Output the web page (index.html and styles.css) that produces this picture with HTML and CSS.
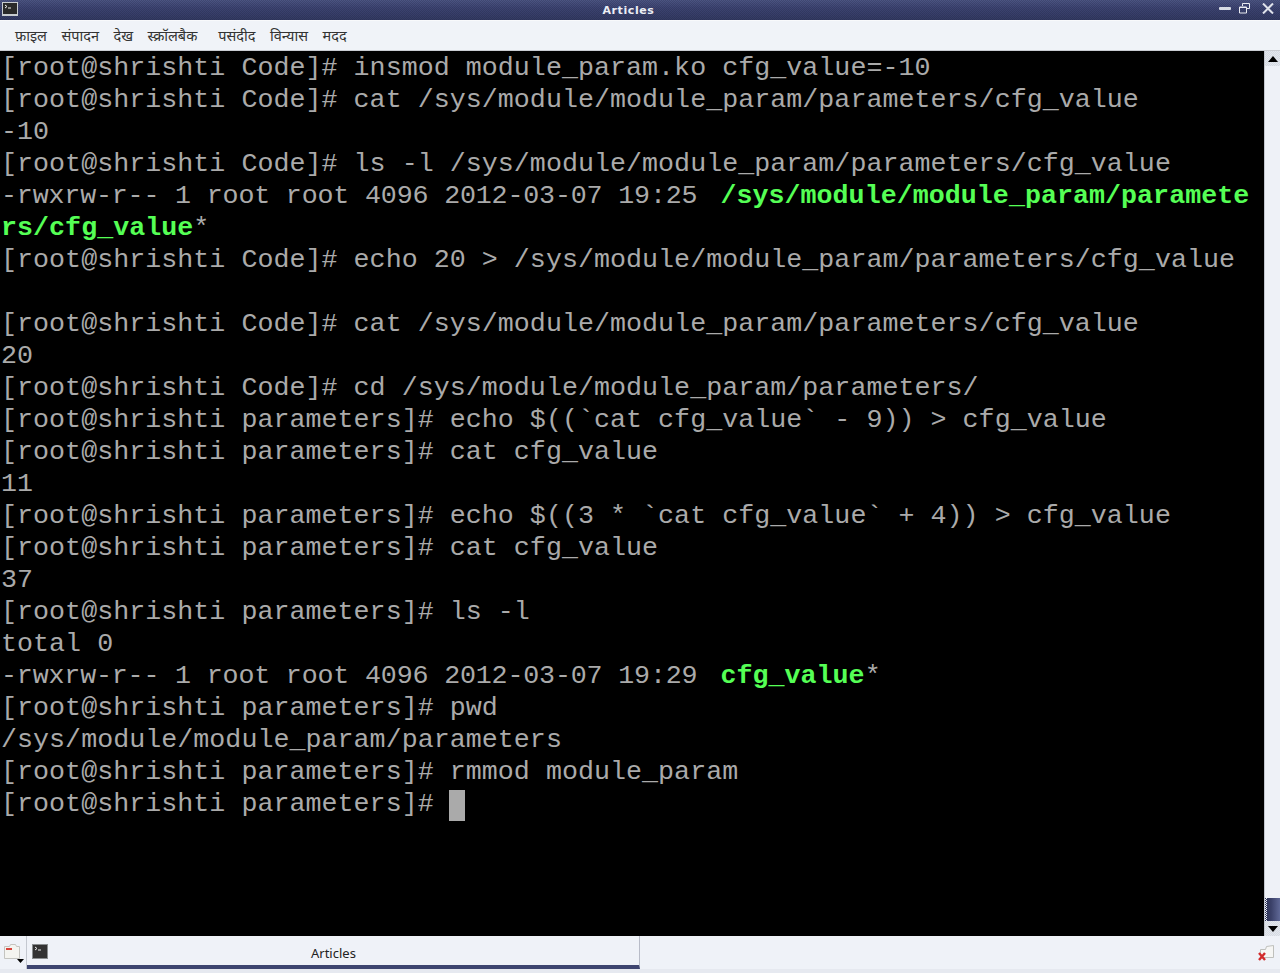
FILE: index.html
```html
<!DOCTYPE html>
<html lang="hi">
<head>
<meta charset="utf-8">
<title>Articles</title>
<link rel="stylesheet" href="styles.css">
</head>
<body>
<div class="window">
  <header class="titlebar">
    <svg class="app-icon" width="16" height="14" viewBox="0 0 16 14"><rect x="0.5" y="0.5" width="15" height="13" fill="#2a2a2a" stroke="#c8ccd0"/><path d="M0 12h16v2H0z" fill="#c8ccd0"/><path d="M3 3l2 1.5-2 1.5M6 6h3" stroke="#eee" fill="none"/></svg>
    <span class="title">Articles</span>
    <div class="win-buttons">
      <svg class="btn-min" width="12" height="6" viewBox="0 0 12 6"><rect x="0" y="1" width="12" height="3" rx="1" fill="#d8dce4"/></svg>
      <svg class="btn-max" width="11" height="11" viewBox="0 0 11 11"><path d="M3.5 3V.5h7v5H8M.5 4h7v6h-7z" fill="none" stroke="#e8eaf0"/><path d="M1 4h6v1H1z" fill="#e8eaf0"/></svg>
      <svg width="12" height="11" viewBox="0 0 12 11"><path d="M1 .5l10 10M11 .5l-10 10" stroke="#dfe2ea" stroke-width="2"/></svg>
    </div>
  </header>
  <nav class="menubar">
    <span>फ़ाइल</span><span>संपादन</span><span>देख</span><span>स्क्रॉलबैक</span><span class="pref">पसंदीद</span><span>विन्यास</span><span>मदद</span>
  </nav>
  <main class="content">
    <pre class="terminal">[root@shrishti Code]# insmod module_param.ko cfg_value=-10
[root@shrishti Code]# cat /sys/module/module_param/parameters/cfg_value
-10
[root@shrishti Code]# ls -l /sys/module/module_param/parameters/cfg_value
<span class="perm">-rwxrw-r-- 1 root root 4096 2012-03-07 19:25</span> <b class="exec">/sys/module/module_param/paramete</b>
<b>rs/cfg_value</b>*
[root@shrishti Code]# echo 20 &gt; /sys/module/module_param/parameters/cfg_value

[root@shrishti Code]# cat /sys/module/module_param/parameters/cfg_value
20
[root@shrishti Code]# cd /sys/module/module_param/parameters/
[root@shrishti parameters]# echo $((`cat cfg_value` - 9)) &gt; cfg_value
[root@shrishti parameters]# cat cfg_value
11
[root@shrishti parameters]# echo $((3 * `cat cfg_value` + 4)) &gt; cfg_value
[root@shrishti parameters]# cat cfg_value
37
[root@shrishti parameters]# ls -l
total 0
<span class="perm">-rwxrw-r-- 1 root root 4096 2012-03-07 19:29</span> <b class="exec">cfg_value</b>*
[root@shrishti parameters]# pwd
/sys/module/module_param/parameters
[root@shrishti parameters]# rmmod module_param
[root@shrishti parameters]# <i class="cursor"> </i></pre>
    <div class="scrollbar">
      <div class="arrow"><svg width="10" height="6" viewBox="0 0 10 6"><path d="M5 0l5 6H0z"/></svg></div>
      <div class="track"><div class="thumb"></div></div>
      <div class="arrow"><svg width="10" height="6" viewBox="0 0 10 6"><path d="M0 0h10L5 6z"/></svg></div>
    </div>
  </main>
  <footer class="taskbar">
    <div class="launcher">
      <svg width="17" height="15" viewBox="0 0 17 15"><path d="M.5 2.5h5l1-2h5l1 2h3v12H.5z" fill="#f4f4f0" stroke="#c4c4c0"/><path d="M2 4h6v2H2z" fill="#d8443c"/></svg>
      <svg class="drop" width="7" height="4" viewBox="0 0 7 4"><path d="M0 0h7L3.5 4z"/></svg>
    </div>
    <div class="task">
      <svg width="16" height="15" viewBox="0 0 16 15"><rect x="0.5" y="0.5" width="15" height="14" fill="#333" stroke="#8a8e90"/><path d="M3 3l2 1.5-2 1.5M6 6h3" stroke="#eee" fill="none"/></svg>
      <span class="task-label">Articles</span>
    </div>
    <div class="tray">
      <svg width="17" height="16" viewBox="0 0 17 16"><path d="M2.5 4.5h5l1-3 7-1v12h-13z" fill="#f6f6f4" stroke="#bfc0bc"/><path d="M1 8l6 7M7 8l-6 7" stroke="#d22c2c" stroke-width="2.4"/></svg>
    </div>
  </footer>
</div>
</body>
</html>
```
FILE: styles.css
```css
* { box-sizing: border-box; }
html, body { margin: 0; padding: 0; }
body { background: #000; overflow: hidden; }
.window { width: 1280px; height: 973px; display: flex; flex-direction: column; }
.titlebar {
  height: 20px; flex: none; position: relative; display: flex; align-items: center; justify-content: center;
  padding-right: 23px;
  background-color: #3b4270;
  background-image:
    repeating-conic-gradient(rgba(20, 24, 50, 0.22) 0 25%, transparent 0 50%),
    linear-gradient(#4d5684, #3d4472 40%, #333a62);
  background-size: 2px 2px, auto;
}
.app-icon { position: absolute; left: 2px; top: 2px; }
.title { color: #eceef4; font: bold 11px "DejaVu Sans", sans-serif; letter-spacing: 0.6px; }
.win-buttons { position: absolute; right: 6px; top: 3px; display: flex; align-items: center; gap: 11px; }
.btn-min { margin-right: -3px; }
.btn-max { margin-right: 1px; }
.menubar {
  height: 31px; flex: none; display: flex; align-items: center; gap: 14.5px; padding: 0 0 2px 15px;
  background: #f0f3f8; border-top: 1px solid #f8f9fb; border-bottom: 1px solid #c9ccd2;
  font: 14.5px "Noto Sans", "DejaVu Sans", sans-serif; color: #333;
}
.menubar .pref { margin-left: 6.5px; }
.content { flex: 1; min-height: 0; display: flex; background: #000; }
.terminal {
  flex: 1; margin: 0; padding: 1px 0 0 1px; overflow: hidden;
  font: 26.67px/32px "Liberation Mono", monospace; letter-spacing: 0.03px; color: #aaa; background: #000; white-space: pre;
}
.terminal b { color: #55ff55; font-weight: bold; }
.terminal .exec { margin-left: 7px; }
.perm { letter-spacing: -0.17px; }
.cursor { display: inline-block; width: 16px; height: 31px; margin-left: -1px; vertical-align: -2px; background: #aaa; }
.scrollbar { width: 16px; flex: none; display: flex; flex-direction: column; background: #eef1f7; border-left: 1px solid #c4c8d0; }
.arrow {
  height: 15px; flex: none; display: flex; align-items: center; justify-content: center;
  background-color: #e4e8ee;
  background-image: repeating-conic-gradient(rgba(180, 186, 200, 0.3) 0 25%, transparent 0 50%);
  background-size: 2px 2px;
}
.track { flex: 1; display: flex; flex-direction: column; justify-content: flex-end; }
.thumb {
  height: 23px;
  background-image:
    repeating-conic-gradient(#eef1f7 0 25%, transparent 0 50%),
    linear-gradient(90deg, #2e3458, #3a4068 40%, #5f6896);
  background-size: 2px 2px, auto;
  background-repeat: repeat-y, no-repeat;
}
.taskbar { height: 37px; flex: none; display: flex; background: #eff2f8; border-bottom: 4px solid #e6e9f0; }
.launcher { width: 27px; flex: none; padding: 8px 0 0 4px; position: relative; border-right: 1px solid #c4c8d0; }
.launcher svg { display: block; }
.drop { position: absolute; left: 17px; top: 23px; }
.task { width: 613px; flex: none; position: relative; border-right: 1px solid #b8bcc8; border-bottom: 4px solid #3e4570; display: flex; align-items: flex-start; padding: 8px 0 0 5px; }
.task-label { position: absolute; left: 284px; top: 8px; font: 13px "Noto Sans", sans-serif; color: #222; }
.tray { flex: 1; display: flex; justify-content: flex-end; padding: 9px 5px 0 0; }
```
